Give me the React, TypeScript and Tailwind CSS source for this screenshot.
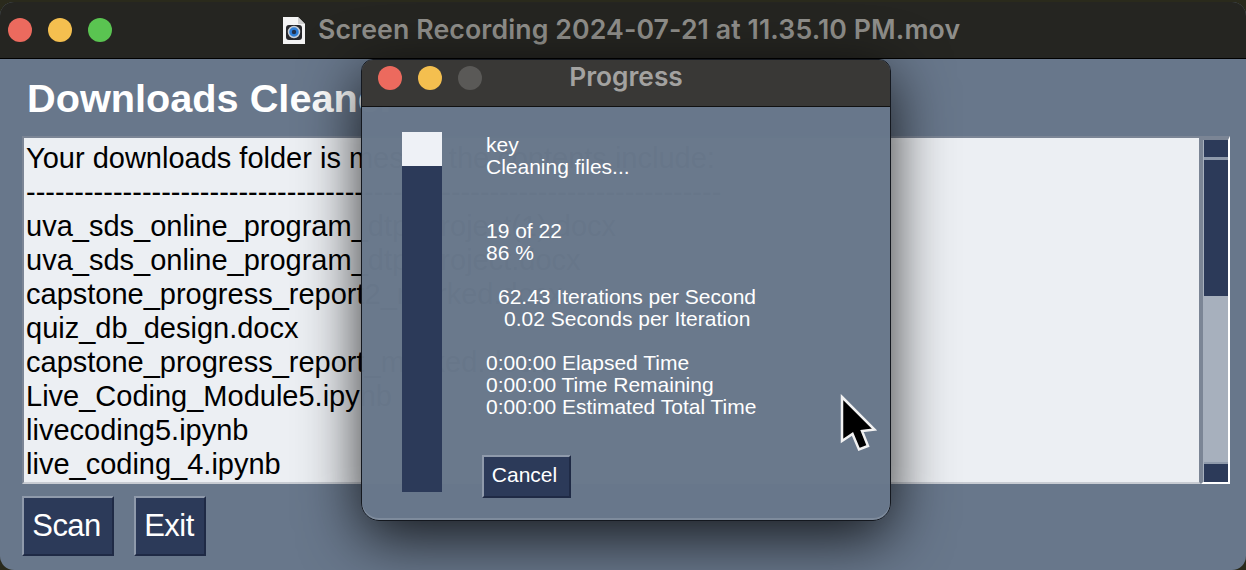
import React from 'react';

const files = [
  'uva_sds_online_program_dtp_project(1).docx',
  'uva_sds_online_program_dtp_project.docx',
  'capstone_progress_report2_marked.docx',
  'quiz_db_design.docx',
  'capstone_progress_report_marked.docx',
  'Live_Coding_Module5.ipynb',
  'livecoding5.ipynb',
  'live_coding_4.ipynb',
];

function Dot({ color }: { color: string }) {
  return <span className={`block w-6 h-6 rounded-full ${color}`} />;
}

function NavyButton({ label, className }: { label: string; className: string }) {
  return (
    <button
      className={`bg-[#2c3a59] text-white border-2 border-t-[#8f9aab] border-l-[#8f9aab] border-r-[#1f2a45] border-b-[#1f2a45] ${className}`}
    >
      {label}
    </button>
  );
}

function Scrollbar() {
  return (
    <div className="w-[29px] h-[348px] flex flex-col border-2 border-t-[4px] border-r-white border-b-white border-t-[#7b8595] border-l-[#7b8595] bg-[#a7b0bd]">
      <div className="h-[20px] bg-[#2c3a59] border-b-[3px] border-[#8f9aab] ml-[1px] shrink-0" />
      <div className="h-[136px] bg-[#2c3a59] shrink-0 ml-[1px]" />
      <div className="flex-1" />
      <div className="h-[20px] bg-[#2c3a59] border-t-2 border-[#8f9aab] ml-[1px] shrink-0" />
    </div>
  );
}

function ProgressDialog() {
  return (
    <div className="absolute left-[361px] top-[59px] w-[530px] h-[462px] rounded-b-[18px] rounded-t-[12px] overflow-hidden border border-[#14181f] bg-[#68778b]/[0.99] shadow-[0_16px_60px_rgba(0,0,0,0.8),inset_0_-2px_0_rgba(255,255,255,0.15)] font-['Liberation_Sans',sans-serif]">
      <div className="h-[47px] bg-[#393836] border-b border-[#111] flex items-center relative pl-[16px] pb-[10px]">
        <div className="flex gap-4">
          <Dot color="bg-[#ec6a5e]" />
          <Dot color="bg-[#f4bf4f]" />
          <Dot color="bg-[#5a5957]" />
        </div>
        <span className="absolute left-0 right-0 text-center -translate-y-[1px] text-[26.3px] font-semibold text-[#a3a2a0] font-['Inter',sans-serif]">Progress</span>
      </div>
      <div className="flex pl-10 pt-[25px]">
        <div className="w-10 h-[360px] bg-[#2c3a59] shrink-0">
          <div className="h-[34px] bg-[#eef1f6]" />
        </div>
        <div className="ml-11 text-white text-[21px] leading-[22px] mt-[2px]">
          <p>key</p>
          <p>Cleaning files...</p>
          <p className="mt-[42px]">19 of 22</p>
          <p>86 %</p>
          <p className="mt-[22px] pl-3">62.43 Iterations per Second</p>
          <p className="pl-[18px]">0.02 Seconds per Iteration</p>
          <p className="mt-[22px]">0:00:00 Elapsed Time</p>
          <p>0:00:00 Time Remaining</p>
          <p>0:00:00 Estimated Total Time</p>
          <NavyButton label="Cancel" className="block mt-[37px] -ml-1 w-[89px] h-[43px] text-[21px] pr-[4px] pb-[3px]" />
        </div>
      </div>
    </div>
  );
}

function Cursor() {
  return (
    <svg className="absolute left-[836px] top-[390px]" width="44" height="66" viewBox="0 0 44 66">
      <path d="M6 7 L38.5 39.5 L26 41 L32 56 L23 59.5 L16.5 44 L6 51 Z" fill="#000" stroke="#f2f2f2" strokeWidth="2.5" strokeLinejoin="miter" />
    </svg>
  );
}

export default function App() {
  return (
    <div className="relative w-[1246px] h-[570px] overflow-hidden bg-[#2a2a1c] font-['Liberation_Sans',sans-serif]">
      <div className="mt-[2px] h-[568px] rounded-[14px] overflow-hidden bg-[#68778b] flex flex-col">
        <div className="h-[57px] bg-[#252521] border-b border-black flex items-center shrink-0 pl-[8px]">
          <div className="flex gap-4">
            <Dot color="bg-[#ec6a5e]" />
            <Dot color="bg-[#f4bf4f]" />
            <Dot color="bg-[#5ac451]" />
          </div>
          <svg className="ml-[170px]" width="24" height="29" viewBox="0 0 24 29">
            <path d="M1 1 H16 L23 8 V28 H1 Z" fill="#f4f4f4" />
            <path d="M16 1 L23 8 H16 Z" fill="#cfcfcf" />
            <rect x="4" y="9" width="16" height="15" rx="3" fill="#27272b" />
            <circle cx="12" cy="16" r="5.5" fill="#2f7fd8" stroke="#c5ccd4" strokeWidth="1.5" />
            <circle cx="12" cy="16" r="2.2" fill="#22304a" />
          </svg>
          <span className="ml-[12px] -mt-[2px] text-[26.7px] tracking-[0.1px] font-semibold text-[#8f8e8a] font-['Inter',sans-serif] whitespace-nowrap">Screen Recording 2024-07-21 at 11.35.10 PM.mov</span>
        </div>
        <div className="pl-[22px] pt-[16px] flex flex-col">
          <h1 className="text-[39.7px] leading-[46px] font-bold text-white pl-[5px]">Downloads Cleaner</h1>
          <div className="flex mt-[15px]">
            <div className="w-[1179px] h-[348px] bg-[#eceff3] border-2 border-[#7b8595] border-b-[#c8ccd3] pl-[2px] pt-[3px] text-black text-[29px] leading-[34px] overflow-hidden whitespace-nowrap">
              <p>Your downloads folder is messy; the contents include:</p>
              <p>------------------------------------------------------------------------</p>
              {files.map((f) => (
                <p key={f}>{f}</p>
              ))}
            </div>
            <Scrollbar />
          </div>
          <div className="flex gap-5 mt-[12px]">
            <NavyButton label="Scan" className="w-[92px] h-[60px] text-[31px] tracking-[-0.6px] pr-[3px]" />
            <NavyButton label="Exit" className="w-[72px] h-[60px] text-[31px] tracking-[-0.5px] pr-[2px]" />
          </div>
        </div>
      </div>
      <ProgressDialog />
      <Cursor />
    </div>
  );
}
